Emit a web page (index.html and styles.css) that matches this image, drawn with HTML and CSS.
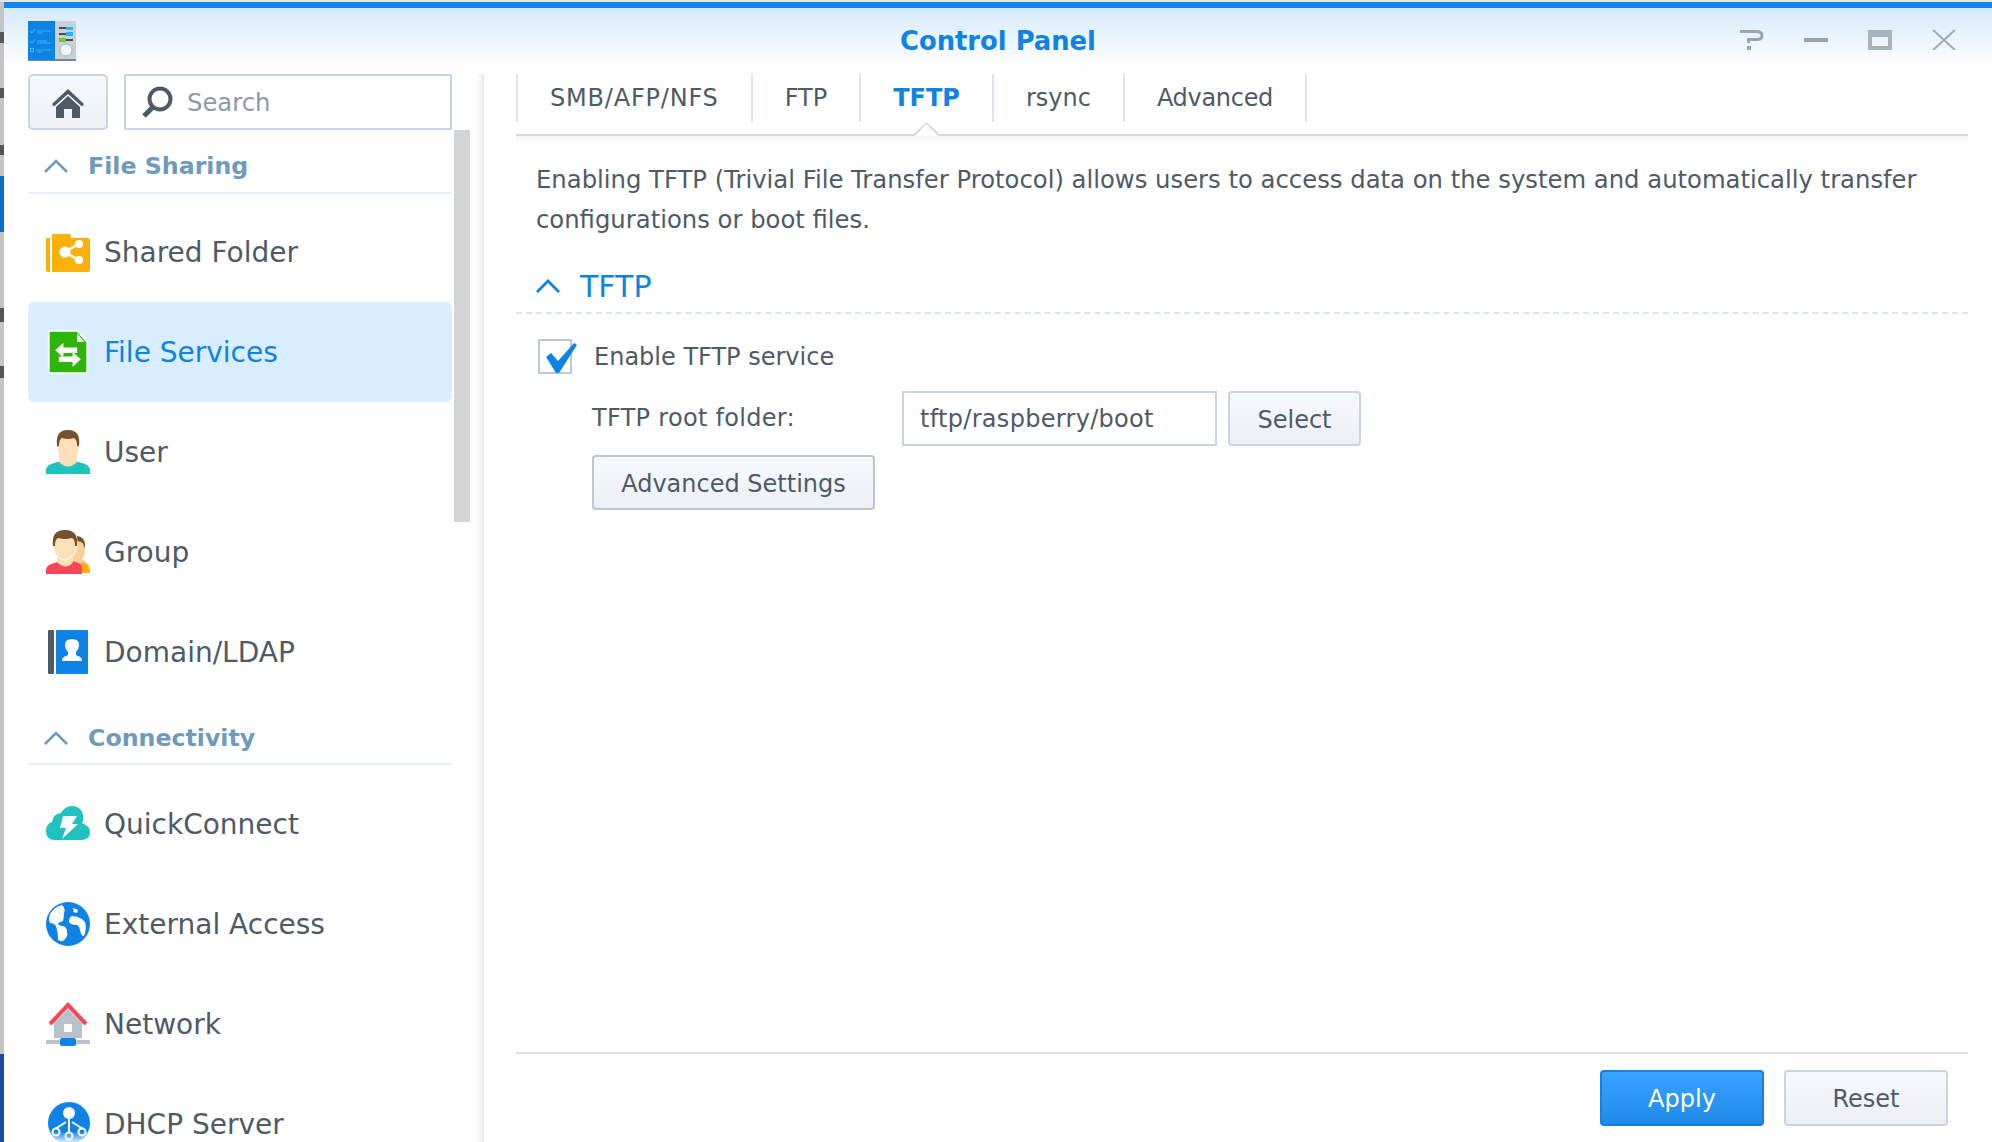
FILE: index.html
```html
<!DOCTYPE html>
<html>
<head>
  <meta name="viewport" content="width=device-width, initial-scale=1.0">
  <title>Control Panel</title>
  <link rel="stylesheet" href="styles.css">
</head>
<body>
  <div class="page">
    <div class="desktop-strip"></div>
    <div class="window">
      <div class="titlebar">
        <svg class="app-logo" viewBox="0 0 48 40">
          <rect x="0" y="0" width="48" height="39" rx="1" fill="#c9d0d6"/>
          <rect x="0" y="38" width="48" height="2" fill="#7d8690"/>
          <rect x="0" y="0" width="27" height="39" fill="#0f82e6"/>
          <path d="M2 10l2 2 3-4M2 20l2 2 3-4" stroke="#39c6f5" fill="none" stroke-width="1"/>
          <rect x="2.500" y="27.500" width="3" height="3" stroke="#39c6f5" fill="none"/>
          <path d="M9 10h14M9 12h5M9 20h10M9 22h14M9 29h14M9 31h5" stroke="#39c6f5" stroke-width="0.800"/>
          <rect x="31" y="6" width="14" height="2" fill="#444c55"/>
          <rect x="38" y="6" width="7" height="3" fill="#25b9f0"/>
          <rect x="31" y="12" width="14" height="2" fill="#444c55"/>
          <rect x="38" y="11" width="7" height="4" fill="#25b9f0"/>
          <rect x="31" y="18" width="14" height="2" fill="#444c55"/>
          <rect x="31" y="17" width="7" height="4" fill="#6ccf1a"/>
          <circle cx="38" cy="29" r="6" fill="#eef7fd" stroke="#aab4bc"/>
        </svg>
        <div class="window-title">Control Panel</div>
        <div class="window-controls">
          <svg class="win-icon" viewBox="0 0 24 20"><path d="M0 1.500h17q5 0 5 4t-5 4H8.500v3.500" fill="none" stroke="#9ba4ae" stroke-width="3"/><rect x="7" y="16" width="4" height="4" fill="#9ba4ae"/></svg>
          <svg class="win-icon" viewBox="0 0 24 20"><rect x="0" y="8" width="24" height="4" fill="#9ba4ae"/></svg>
          <svg class="win-icon" viewBox="0 0 24 20"><path d="M0 0h24v20H0z M4 7v9h16V7z" fill="#a9b3bc" fill-rule="evenodd"/></svg>
          <svg class="win-icon" viewBox="0 0 24 20"><path d="M1 0l22 20M23 0L1 20" stroke="#a3acb5" stroke-width="2.200"/></svg>
        </div>
      </div>

      <div class="window-body">
        <aside class="sidebar">
          <div class="side-list">
            <div class="side-tools">
              <button class="home-btn">
                <svg class="home-icon" viewBox="0 0 32 32"><path d="M0 18L16 3l16 15-2 2.500L16 8 2 20.500z" fill="#4e5a66"/><path d="M4 21L16 10l12 11v11H20V23h-8v9H4z" fill="#4e5a66"/></svg>
              </button>
              <div class="search-box">
                <svg class="search-icon" viewBox="0 0 32 32"><circle cx="18" cy="13" r="10.500" fill="none" stroke="#4e5a66" stroke-width="4"/><path d="M11 21L2 30" stroke="#4e5a66" stroke-width="5"/></svg>
                <span class="search-text">Search</span>
              </div>
            </div>

            <div class="side-group first">
              <svg class="side-chevron" viewBox="0 0 24 14"><path d="M1 13L12 2l11 11" fill="none" stroke="#6f9ab9" stroke-width="2.600"/></svg>
              <span>File Sharing</span>
            </div>
            <div class="side-item">
              <svg class="item-icon" viewBox="0 0 44 44">
                <path d="M0 8h4v34H2q-2 0-2-2z" fill="#fbb10b"/>
                <path d="M6 4h17q2 0 2 2v2h17q2 0 2 2v30q0 2-2 2H6z" fill="#fbb10b"/>
                <path d="M34 13L19 22l15 9" fill="none" stroke="#fff" stroke-width="2.500"/>
                <circle cx="19" cy="22" r="5.500" fill="#fff"/><circle cx="33" cy="14" r="4" fill="#fff"/><circle cx="33" cy="30" r="4" fill="#fff"/>
              </svg>
              <span>Shared Folder</span>
            </div>
            <div class="side-item selected">
              <svg class="item-icon" viewBox="0 0 44 48">
                <path d="M2 1h30l11 12v32q0 2-2 2H2q-1 0-1-2V3q0-2 1-2z" fill="#2fb50a" stroke="#fff" stroke-width="2"/>
                <path d="M32 4v9h8z" fill="#fff"/>
                <path d="M8 22l9-8v5h15v6H17v5zM36 32l-9-8v5H12v6h15v5z" fill="#fff"/>
              </svg>
              <span>File Services</span>
            </div>
            <div class="side-item">
              <svg class="item-icon" viewBox="0 0 44 44">
                <path d="M0 44v-4q0-4 5-6l10-3q7 7 14 0l10 3q5 2 5 6v4z" fill="#1fc2bf"/>
                <path d="M13 24v8q9 9 18 0v-8z" fill="#fde0b8"/>
                <path d="M11 10q0-10 11-10t11 10v5q0 12-11 15Q11 27 11 15z" fill="#fde0b8"/>
                <path d="M11 16q-2-16 11-16t11 16l-2 0q0-7-3-8-6 2-12 0-3 1-3 8z" fill="#76502a"/>
              </svg>
              <span>User</span>
            </div>
            <div class="side-item">
              <svg class="item-icon" viewBox="0 0 44 44">
                <path d="M30 6q9 0 9 9v4q0 7-3 10l8 6v7H24z" fill="#f9cf98"/>
                <path d="M30 6q9 0 9 10l-1 2q0-5-3-6-3-1-5-1z" fill="#76502a"/>
                <path d="M36 32q6 2 8 9v2h-8z" fill="#fbb10b"/>
                <path d="M0 44v-4q0-4 5-6l10-3q6 7 12 0l8 3q1 1 1 6v4z" fill="#f74657"/>
                <path d="M11 24v8q9 9 16 0v-8z" fill="#fde0b8"/>
                <path d="M7 10q0-10 12-10t12 10v5q0 12-12 15Q7 27 7 15z" fill="#fde0b8" stroke="#fff" stroke-width="1"/>
                <path d="M7 16Q5 0 19 0t12 16l-2 0q0-7-3-8-7 2-14 0-3 1-3 8z" fill="#76502a"/>
              </svg>
              <span>Group</span>
            </div>
            <div class="side-item">
              <svg class="item-icon" viewBox="0 0 44 44">
                <rect x="2" y="0" width="6" height="44" rx="1" fill="#4e5a66"/>
                <rect x="10" y="0" width="32" height="44" rx="1" fill="#0f82e6"/>
                <path d="M16 32q0-4 4-5l2-1v-3q-3-3-3-7 0-6 7-6t7 6q0 4-3 7v3l2 1q4 1 4 5z" fill="#fff" transform="translate(0 -1)"/>
              </svg>
              <span>Domain/LDAP</span>
            </div>

            <div class="side-group">
              <svg class="side-chevron" viewBox="0 0 24 14"><path d="M1 13L12 2l11 11" fill="none" stroke="#6f9ab9" stroke-width="2.600"/></svg>
              <span>Connectivity</span>
            </div>
            <div class="side-item">
              <svg class="item-icon" viewBox="0 0 44 44">
                <path d="M9 38Q0 38 0 29q0-7 6-9 1-8 9-9 4-7 11-7 9 0 11 9 1 5-1 8 8 3 8 9 0 8-9 8z" fill="#1fc2bf"/>
                <path d="M17 14h14l-5 8h6L16 37l4-11h-6z" fill="#fff"/>
              </svg>
              <span>QuickConnect</span>
            </div>
            <div class="side-item">
              <svg class="item-icon" viewBox="0 0 44 44">
                <circle cx="22" cy="22" r="22" fill="#0f82e6"/>
                <path d="M16 3q-8 2-12 9-2 6 0 9 4 0 6 3 2 6 2 14 4 2 5 1 6-5 4-9 0-5-4-6-5 0-5-3l5-2q1-5 1-8 2-4-2-8z" fill="#fff"/>
                <path d="M26 14q5 0 10 3l3 3q2 7-1 14-3 0-4-6-1-5-4-5-5 0-7-3 0-5 3-6zM26 6l4 1 2 1-1 3-4-1 1-2z" fill="#fff"/>
              </svg>
              <span>External Access</span>
            </div>
            <div class="side-item">
              <svg class="item-icon" viewBox="0 0 44 44">
                <path d="M22 7L8 21v15h28V21z" fill="#b8c2cc"/>
                <rect x="18" y="22" width="8" height="8" rx="1" fill="#fff"/>
                <path d="M4 22L22 3l18 19" fill="none" stroke="#f74657" stroke-width="4"/>
                <rect x="0" y="38" width="44" height="4" fill="#b8c2cc"/>
                <rect x="20" y="36" width="4" height="4" fill="#b8c2cc"/>
                <rect x="14" y="36" width="16" height="8" rx="2" fill="#0f82e6"/>
              </svg>
              <span>Network</span>
            </div>
            <div class="side-item">
              <svg class="item-icon" viewBox="0 0 44 44">
                <defs>
                  <linearGradient id="dhcpFade" x1="0" y1="0" x2="0" y2="1">
                    <stop offset="0.700" stop-color="#fff" stop-opacity="0"/>
                    <stop offset="1" stop-color="#fff"/>
                  </linearGradient>
                </defs>
                <circle cx="23" cy="21" r="21" fill="#0f82e6"/>
                <circle cx="23" cy="11" r="6" fill="#fff"/>
                <path d="M23 15v15M20 20L9 27M26 20l11 7" stroke="#fff" stroke-width="2"/>
                <circle cx="10" cy="30" r="3.500" fill="#0f82e6" stroke="#fff" stroke-width="2"/>
                <circle cx="23" cy="34" r="3.500" fill="#0f82e6" stroke="#fff" stroke-width="2"/>
                <circle cx="36" cy="30" r="3.500" fill="#0f82e6" stroke="#fff" stroke-width="2"/>
                <rect x="0" y="0" width="44" height="42" fill="url(#dhcpFade)"/>
              </svg>
              <span>DHCP Server</span>
            </div>
          </div>
          <div class="side-scrollbar"></div>
        </aside>

        <main class="content">
          <div class="tabs">
            <div class="tab tab-wide">SMB/AFP/NFS</div>
            <div class="tab">FTP</div>
            <div class="tab active">TFTP</div>
            <div class="tab">rsync</div>
            <div class="tab tab-narrow">Advanced</div>
          </div>

          <div class="pane">
            <p class="intro">Enabling TFTP (Trivial File Transfer Protocol) allows users to access data on the system and automatically transfer configurations or boot files.</p>
            <div class="section-head">
              <svg class="section-chevron" viewBox="0 0 24 14"><path d="M1 13L12 2l11 11" fill="none" stroke="#0f82e6" stroke-width="2.800"/></svg>
              <span>TFTP</span>
            </div>
            <div class="check-row">
              <span class="checkbox">
                <svg class="check-mark" viewBox="0 0 36 30"><path d="M3 14l5-4 7 8L31 0l3 2-18 28h-3z" fill="#0f82e6"/></svg>
              </span>
              <span>Enable TFTP service</span>
            </div>
            <div class="folder-row">
              <span class="field-label">TFTP root folder:</span>
              <div class="text-input">tftp/raspberry/boot</div>
              <button class="btn select-btn">Select</button>
            </div>
            <button class="btn advanced-btn">Advanced Settings</button>
          </div>

          <div class="footer">
            <button class="btn btn-primary">Apply</button>
            <button class="btn btn-reset">Reset</button>
          </div>
        </main>
      </div>
    </div>
  </div>
</body>
</html>
```

FILE: styles.css
```css
* {
  box-sizing: border-box;
}

html, body {
  height: 100%;
  margin: 0;
  padding: 0;
  overflow: hidden;
}

body {
  font-family: "DejaVu Sans", Verdana, sans-serif;
  font-size: 24px;
  color: #4e5a66;
  background: #fff;
}

button {
  font-family: inherit;
  font-size: inherit;
  color: inherit;
}

.page {
  display: flex;
  height: 1142px;
}

.desktop-strip {
  width: 4px;
  flex: none;
  background: linear-gradient(to bottom,
    #e4e4e4 0, #e4e4e4 2px,
    #c4c4c4 2px, #c4c4c4 32px, #555 32px, #555 43px,
    #c4c4c4 43px, #c4c4c4 88px, #555 88px, #555 98px,
    #c4c4c4 98px, #c4c4c4 145px, #555 145px, #555 155px,
    #c4c4c4 155px, #c4c4c4 176px, #0f6fc6 176px, #0f6fc6 232px,
    #c4c4c4 232px, #c4c4c4 308px, #555 308px, #555 322px,
    #c4c4c4 322px, #c4c4c4 366px, #555 366px, #555 378px,
    #c4c4c4 378px, #c4c4c4 1054px, #1c48a8 1054px, #1c48a8 1142px);
}

.window {
  flex: 1;
  display: flex;
  flex-direction: column;
  min-width: 0;
  border-top: 2px solid #e4e4e4;
}

/* title bar */
.titlebar {
  height: 72px;
  flex: none;
  display: flex;
  align-items: center;
  justify-content: center;
  position: relative;
  border-top: 6px solid #1186e8;
  background: linear-gradient(to bottom, #d6eafa 0, #ffffff 90%);
}

.app-logo {
  position: absolute;
  left: 24px;
  top: 13px;
  width: 48px;
  height: 40px;
}

.window-title {
  font-size: 25.8px;
  font-weight: bold;
  color: #0f82e6;
}

.window-controls {
  position: absolute;
  right: 36px;
  top: 22px;
  display: flex;
  gap: 40px;
}

.win-icon {
  display: block;
  width: 24px;
  height: 20px;
}

.window-body {
  flex: 1;
  display: flex;
  min-height: 0;
}

/* sidebar */
.sidebar {
  width: 480px;
  flex: none;
  display: flex;
  padding-left: 24px;
  border-right: 2px solid #e6e8ea;
  box-shadow: inset -6px 0 6px -6px #ddd;
  overflow: hidden;
}

.side-list {
  width: 424px;
  flex: none;
}

.side-scrollbar {
  width: 16px;
  height: 392px;
  margin: 56px 0 0 2px;
  background: #d3d4d6;
}

.side-tools {
  display: flex;
  gap: 16px;
  height: 56px;
}

.home-btn {
  width: 80px;
  height: 56px;
  padding: 0;
  display: flex;
  align-items: center;
  justify-content: center;
  border: 2px solid #c9d4e0;
  border-radius: 5px;
  background: linear-gradient(to bottom, #f6f9fc, #edf1f6);
}

.home-icon {
  width: 32px;
  height: 32px;
}

.search-box {
  flex: 1;
  display: flex;
  align-items: center;
  gap: 13px;
  padding-left: 16px;
  border: 2px solid #c9d4e0;
  background: #fff;
}

.search-icon {
  width: 32px;
  height: 32px;
}

.search-text {
  font-size: 24.3px;
  color: #8f9aa6;
}

.side-group {
  height: 63px;
  display: flex;
  align-items: center;
  gap: 20px;
  padding: 10px 0 0 16px;
  font-size: 23.7px;
  font-weight: bold;
  color: #6f9ab9;
  border-bottom: 2px solid #eaeff4;
}

.side-group.first {
  height: 64px;
}

.side-chevron {
  width: 24px;
  height: 14px;
}

.side-item {
  height: 100px;
  display: flex;
  align-items: center;
  gap: 14px;
  padding-left: 18px;
  border-radius: 6px;
  font-size: 28px;
}

.side-item.selected {
  background: #d8edfe;
  color: #0f82e6;
}

.side-group + .side-item {
  margin-top: 8px;
}

.side-group:not(.first) + .side-item {
  margin-top: 9px;
}

.item-icon {
  width: 44px;
  height: 44px;
  flex: none;
}

/* main pane */
.content {
  flex: 1;
  min-width: 0;
  display: flex;
  flex-direction: column;
  padding: 0 24px 0 32px;
}

.tabs {
  display: flex;
  height: 62px;
  flex: none;
  position: relative;
  padding-bottom: 12px;
  border-bottom: 2px solid #d5d8db;
}

.tab {
  padding: 0 32px;
  display: flex;
  align-items: center;
  border-left: 2px solid #dbe4ed;
}

.tab:last-child {
  border-right: 2px solid #dbe4ed;
}

.tab-wide {
  letter-spacing: 0.8px;
}

.tab-narrow {
  letter-spacing: -0.3px;
}

.tab.active {
  color: #0f82e6;
  font-weight: bold;
  position: relative;
}

.tab.active::before,
.tab.active::after {
  content: "";
  position: absolute;
  left: 50%;
  clip-path: polygon(50% 0, 100% 100%, 0 100%);
}

.tab.active::before {
  bottom: -14px;
  margin-left: -15px;
  width: 30px;
  height: 14px;
  background: #d5d8db;
}

.tab.active::after {
  bottom: -14px;
  margin-left: -12px;
  width: 24px;
  height: 12px;
  background: #fff;
}

.pane {
  flex: 1;
  min-height: 0;
  background: linear-gradient(to bottom, #f4f5f6 0, #fff 8px);
}

.intro {
  margin: 24px 0 0 20px;
  font-size: 24.3px;
  line-height: 40px;
}

.section-head {
  height: 64px;
  display: flex;
  align-items: center;
  gap: 20px;
  padding: 10px 0 0 20px;
  margin-top: 10px;
  font-size: 30px;
  color: #0f82e6;
  border-bottom: 2px dashed #dbe4ed;
}

.section-chevron {
  width: 24px;
  height: 14px;
}

.check-row {
  display: flex;
  align-items: center;
  gap: 22px;
  margin: 25px 0 0 22px;
}

.checkbox {
  width: 34px;
  height: 35px;
  border: 2px solid #bcc8d4;
  background: #fff;
  position: relative;
  flex: none;
}

.check-mark {
  position: absolute;
  left: 3px;
  top: 2px;
  width: 36px;
  height: 30px;
}

.folder-row {
  display: flex;
  align-items: center;
  margin: 17px 0 0 76px;
}

.field-label {
  width: 310px;
  flex: none;
  padding-bottom: 2px;
  letter-spacing: 0.3px;
}

.text-input {
  width: 315px;
  height: 55px;
  display: flex;
  align-items: center;
  padding-left: 16px;
  letter-spacing: 0.3px;
  border: 2px solid #c9d4e0;
  background: #fff;
}

.btn {
  height: 55px;
  padding: 2px 0 0;
  border: 2px solid #c9d4e0;
  border-radius: 4px;
  background: linear-gradient(to bottom, #f6f9fc, #ecf0f6);
}

.select-btn {
  width: 133px;
  margin-left: 11px;
}

.advanced-btn {
  display: block;
  width: 283px;
  margin: 9px 0 0 76px;
  border-color: #bcc6d2;
}

.footer {
  height: 90px;
  flex: none;
  display: flex;
  justify-content: flex-end;
  gap: 20px;
  padding: 16px 20px 0 0;
  border-top: 2px solid #dedfe0;
}

.btn-primary {
  width: 164px;
  height: 56px;
  color: #fff;
  border-color: #1a7fd8;
  background: linear-gradient(to bottom, #38a3ff, #1f8ae8);
}

.btn-reset {
  width: 164px;
  height: 56px;
}
```
